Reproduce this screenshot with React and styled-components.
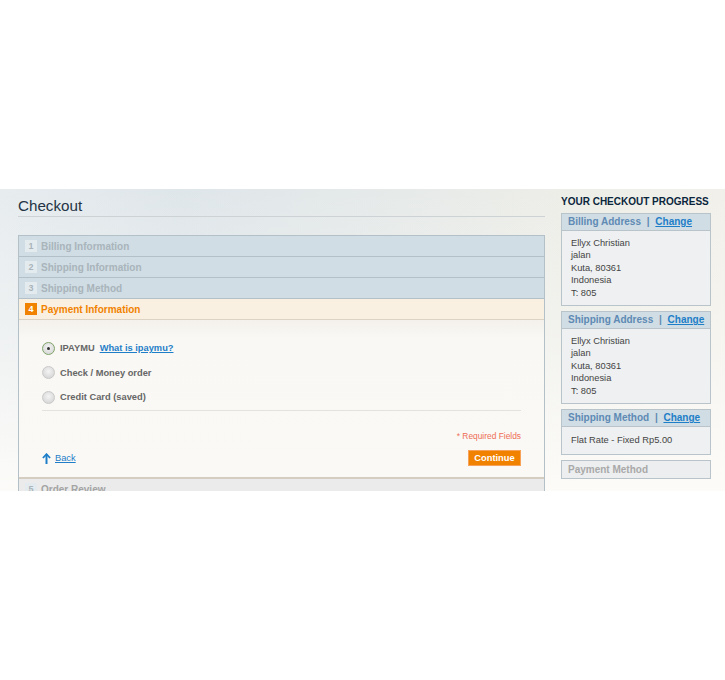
import React from 'react';
import styled, { createGlobalStyle } from 'styled-components';

const GlobalStyle = createGlobalStyle`
  html, body {
    margin: 0;
    padding: 0;
    background: #ffffff;
  }
  body {
    font-family: "Liberation Sans", Arial, sans-serif;
  }
`;

const steps = [
  { num: 1, label: 'Billing Information' },
  { num: 2, label: 'Shipping Information' },
  { num: 3, label: 'Shipping Method' },
];

const methods = [
  { id: 'ipaymu', label: 'IPAYMU', link: 'What is ipaymu?', checked: true },
  { id: 'checkmo', label: 'Check / Money order' },
  { id: 'ccsave', label: 'Credit Card (saved)' },
];

function UpArrow() {
  return (
    <svg width="9" height="11" viewBox="0 0 9 11">
      <path d="M4.5 1.5 L4.5 11" stroke="#1e7ec8" strokeWidth="2" />
      <path d="M0.9 5 L4.5 1.2 L8.1 5" stroke="#1e7ec8" strokeWidth="1.8" fill="none" />
    </svg>
  );
}

function App() {
  return (
    <>
      <GlobalStyle />
      <Main>
        <Content>
          <Title>Checkout</Title>
          <Steps>
            {steps.map((s) => (
              <StepHead key={s.num}>
                <Num>{s.num}</Num>
                {s.label}
              </StepHead>
            ))}
            <StepHead $active>
              <Num $active>4</Num>
              Payment Information
            </StepHead>
            <StepBody>
              <Methods>
                {methods.map((m) => (
                  <Method key={m.id}>
                    <Radio $checked={m.checked} />
                    <span>{m.label}</span>
                    {m.link && <BlueLink href="#">{m.link}</BlueLink>}
                  </Method>
                ))}
              </Methods>
              <Required>* Required Fields</Required>
              <Actions>
                <BackLink href="#">
                  <UpArrow />
                  <span>Back</span>
                </BackLink>
                <Button>Continue</Button>
              </Actions>
            </StepBody>
            <StepHead $muted>
              <Num>5</Num>
              Order Review
            </StepHead>
          </Steps>
        </Content>

        <Sidebar>
          <SideTitle>YOUR CHECKOUT PROGRESS</SideTitle>
          <ProgressBox>
            <BoxHead>
              Billing Address <Sep>|</Sep> <BlueLink href="#">Change</BlueLink>
            </BoxHead>
            <BoxBody>
              Ellyx Christian<br />jalan<br />Kuta, 80361<br />Indonesia<br />T: 805
            </BoxBody>
          </ProgressBox>
          <ProgressBox>
            <BoxHead>
              Shipping Address <Sep>|</Sep> <BlueLink href="#">Change</BlueLink>
            </BoxHead>
            <BoxBody>
              Ellyx Christian<br />jalan<br />Kuta, 80361<br />Indonesia<br />T: 805
            </BoxBody>
          </ProgressBox>
          <ProgressBox>
            <BoxHead>
              Shipping Method <Sep>|</Sep> <BlueLink href="#">Change</BlueLink>
            </BoxHead>
            <BoxBody $single>Flat Rate - Fixed Rp5.00</BoxBody>
          </ProgressBox>
          <ProgressBox>
            <BoxHead $muted>Payment Method</BoxHead>
          </ProgressBox>
        </Sidebar>
      </Main>
    </>
  );
}

export default App;

const Main = styled.main`
  margin-top: 189px;
  height: 302px;
  overflow: hidden;
  display: grid;
  grid-template-columns: 527px 150px;
  column-gap: 16px;
  padding: 0 0 0 18px;
  box-sizing: border-box;
  background:
    linear-gradient(180deg, rgba(252, 251, 248, 0) 0%, rgba(252, 251, 248, 0.35) 45%, rgba(253, 252, 249, 0.95) 100%),
    linear-gradient(90deg, #e7ecef 0%, #dfe6ea 25%, #e6eae9 55%, #eeeee8 80%, #f1f0ea 100%);
`;

const Content = styled.div`
  padding-top: 7px;
`;

const Title = styled.h1`
  margin: 0;
  font-size: 15.2px;
  line-height: 20px;
  font-weight: normal;
  color: #243445;
  border-bottom: 1px solid #cdd2d4;
`;

const Steps = styled.div`
  margin-top: 18px;
  border: 1px solid #b4c0c7;
  border-bottom: none;
`;

const StepHead = styled.div`
  display: flex;
  align-items: center;
  gap: 4px;
  height: 20px;
  padding-left: 6px;
  font-size: 10px;
  font-weight: bold;
  color: ${(p) => (p.$active ? '#f18200' : p.$muted ? '#a4a4a4' : '#a9b4bb')};
  background: ${(p) => (p.$active ? '#faf0e1' : p.$muted ? '#ebebeb' : '#d0dde4')};
  border-bottom: 1px solid ${(p) => (p.$active ? '#ddd3c4' : '#b4c0c7')};
`;

const Num = styled.span`
  display: inline-flex;
  align-items: center;
  justify-content: center;
  width: 12px;
  height: 12px;
  font-size: 9px;
  font-weight: bold;
  color: ${(p) => (p.$active ? '#ffffff' : '#a9b4bb')};
  background: ${(p) => (p.$active ? '#f18200' : '#e4ebef')};
`;

const StepBody = styled.div`
  background: linear-gradient(180deg, #f4f1ec 0%, #f9f8f4 12%, #faf9f6 100%);
  border-bottom: 2px solid #d3cdc2;
  padding: 21px 23px 0 23px;
  height: 159px;
  box-sizing: border-box;
`;

const Methods = styled.div`
  display: flex;
  flex-direction: column;
  gap: 10.5px;
  padding-bottom: 6px;
  border-bottom: 1px solid #e4e2dd;
`;

const Method = styled.label`
  display: flex;
  align-items: center;
  gap: 5px;
  height: 14px;
  font-size: 9.3px;
  font-weight: bold;
  color: #666666;
`;

const Radio = styled.span`
  width: 13px;
  height: 13px;
  border-radius: 50%;
  box-sizing: border-box;
  border: 1px solid ${(p) => (p.$checked ? '#7fa46a' : '#c9c9c9')};
  background: radial-gradient(circle at 50% 40%, #f4f4f4 0%, #dedede 60%, #cfcfcf 100%);
  position: relative;
  ${(p) =>
    p.$checked &&
    `&::after {
      content: '';
      position: absolute;
      left: 4px;
      top: 4px;
      width: 3px;
      height: 3px;
      border-radius: 50%;
      background: #333;
    }`}
`;

const BlueLink = styled.a`
  color: #1e7ec8;
  font-weight: bold;
  text-decoration: underline;
`;

const Required = styled.p`
  margin: 20px 0 0;
  line-height: 10px;
  text-align: right;
  font-size: 8.4px;
  color: #ef6d54;
`;

const Actions = styled.div`
  display: flex;
  justify-content: space-between;
  align-items: center;
  margin-top: 9px;
`;

const BackLink = styled.a`
  display: flex;
  align-items: center;
  gap: 4px;
  font-size: 9.3px;
  color: #1e7ec8;
  text-decoration: none;
  span {
    text-decoration: underline;
  }
`;

const Button = styled.button`
  height: 16px;
  width: 53px;
  padding: 0;
  border: 1px solid #f7a25a;
  background: #f18200;
  color: #ffffff;
  font-family: inherit;
  font-size: 9.3px;
  font-weight: bold;
`;

const Sidebar = styled.aside`
  padding-top: 7px;
  display: flex;
  flex-direction: column;
  gap: 5px;
`;

const SideTitle = styled.h2`
  margin: 0;
  font-size: 10px;
  line-height: 12px;
  font-weight: bold;
  color: #0a263c;
  white-space: nowrap;
`;

const ProgressBox = styled.div`
  border: 1px solid #b9c4ca;
`;

const BoxHead = styled.div`
  height: ${(p) => (p.$muted ? '17px' : '16px')};
  line-height: ${(p) => (p.$muted ? '17px' : '16px')};
  padding-left: 6px;
  font-size: 10px;
  font-weight: bold;
  white-space: nowrap;
  color: ${(p) => (p.$muted ? '#a9a9a9' : '#5e8ab4')};
  background: ${(p) => (p.$muted ? '#eceeef' : '#d0dde4')};
  ${(p) => !p.$muted && 'border-bottom: 1px solid #b9c4ca;'}
`;

const Sep = styled.span`
  margin: 0 3px;
`;

const BoxBody = styled.div`
  background: #eef0f1;
  padding: ${(p) => (p.$single ? '7px 9px' : '6px 9px')};
  font-size: 9.3px;
  line-height: ${(p) => (p.$single ? '13px' : '12.4px')};
  color: #444444;
`;
